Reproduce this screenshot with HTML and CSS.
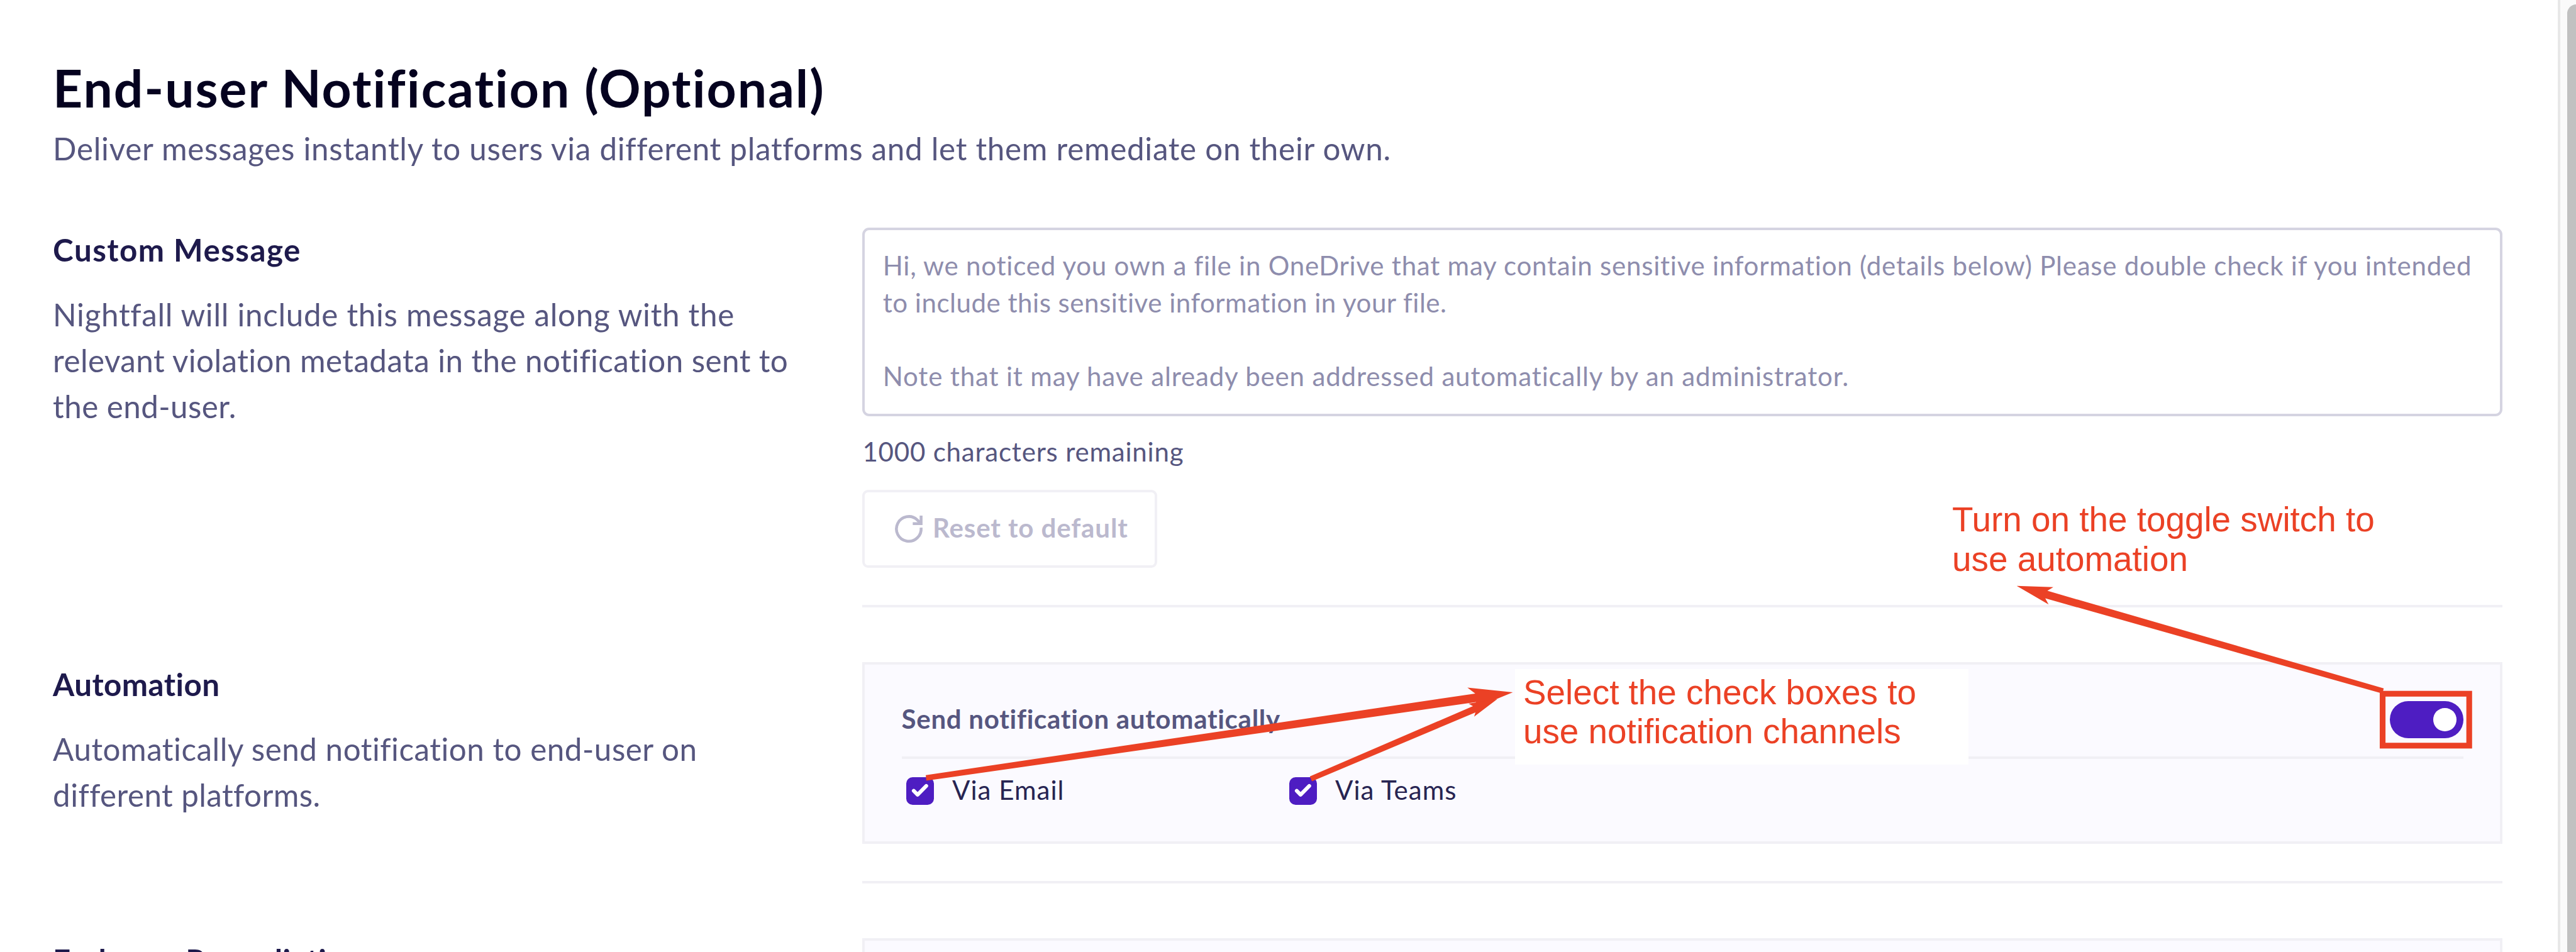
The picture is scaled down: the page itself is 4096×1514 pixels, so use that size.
FILE: index.html
```html
<!DOCTYPE html>
<html lang="en">
<head>
<meta charset="utf-8">
<title>End-user Notification</title>
<link rel="stylesheet" href="styles.css">
</head>
<body>
<div class="page">
  <main class="content">
    <header class="intro">
      <h1>End-user Notification (Optional)</h1>
      <p class="lead">Deliver messages instantly to users via different platforms and let them remediate on their own.</p>
    </header>

    <section class="setting">
      <div class="about">
        <h2>Custom Message</h2>
        <p><span class="ls-74">Nightfall will include this message along with the</span><br><span class="ls-44">relevant violation metadata in the notification sent to</span><br><span class="ls-44">the end-user.</span></p>
      </div>
      <div class="control">
        <div class="message"><span class="ls-80">Hi, we noticed you own a file in OneDrive that may contain sensitive information (details below) Please double check if you intended</span><br><span class="ls-54">to include this sensitive information in your file.</span><br><br><span class="ls-89">Note that it may have already been addressed automatically by an administrator.</span></div>
        <p class="counter">1000 characters remaining</p>
        <button class="reset" type="button">
          <svg class="reset-icon" viewBox="0 0 48 48"><path d="M45.5 22A21.5 21.5 0 1 1 38.6 8.3L44.5 14"/><path d="M45.5 1V15H31"/></svg>
          <span>Reset to default</span>
        </button>
        <div class="divider"></div>
      </div>
    </section>

    <section class="setting">
      <div class="about">
        <h2 class="ls-44">Automation</h2>
        <p><span class="ls-54">Automatically send notification to end-user on</span><br><span class="ls-44">different platforms.</span></p>
      </div>
      <div class="control">
        <div class="panel">
          <div class="panel-head">
            <span class="panel-title">Send notification automatically</span>
            <span class="toggle"><span class="knob"></span></span>
          </div>
          <div class="channels">
            <label class="channel"><span class="check"><svg viewBox="0 0 48 48"><path d="M13 23.7L19.7 30.5L34.8 15.2"/></svg></span><span class="channel-name">Via Email</span></label>
            <label class="channel"><span class="check"><svg viewBox="0 0 48 48"><path d="M13 23.7L19.7 30.5L34.8 15.2"/></svg></span><span class="channel-name">Via Teams</span></label>
          </div>
        </div>
        <div class="divider"></div>
      </div>
    </section>

    <section class="setting">
      <div class="about"><h2 class="ls-44">End-user Remediation</h2></div>
      <div class="control"><div class="panel"><div class="panel-head"></div></div></div>
    </section>
  </main>
  <aside class="scrollbar"><div class="thumb"></div></aside>

  <div class="note note-channels">Select the check boxes to<br>use notification channels</div>
  <div class="note note-toggle">Turn on the toggle switch to<br>use automation</div>
  <svg class="arrows" viewBox="0 0 4480 1656">
    <path d="M1610 1348.3L2565.7 1206.3L2552 1196L2631 1204.3L2557.5 1234.7L2567.3 1221.3L1611 1358Z"/>
    <path d="M2278 1350.4L2561.7 1228.3L2554 1224L2604 1216L2563.7 1246.7L2566 1239.3L2281.7 1359Z"/>
    <path d="M4145.6 1197.3L3560.7 1027.7L3571 1021.3L3507.3 1019L3562.7 1051.3L3557 1040.7L4143.5 1206.5Z"/>
    <rect x="4143.7" y="1206.7" width="150.6" height="90.3"/>
  </svg>
</div>
</body>
</html>
```
FILE: styles.css
```css
* { box-sizing: border-box; margin: 0; padding: 0; }
html, body { overflow: hidden; background: #fff; }

.page {
  zoom: 0.9142857;
  position: relative;
  display: flex;
  width: 4480px;
  height: 1656px;
  overflow: hidden;
  font-family: Lato, "Open Sans", sans-serif;
  color: #56567f;
}
.content { flex: 1; min-width: 0; padding: 96px 96px 0 92px; }

.intro { height: 300px; padding-top: 2px; }
h1 { font-size: 90px; line-height: 110px; font-weight: 700; letter-spacing: 2.15px; color: #05021f; }
.lead { margin-top: 11px; font-size: 54px; line-height: 80px; letter-spacing: 0.77px; }

.setting { display: grid; grid-template-columns: 1408px 2852px; margin-bottom: 96px; }
.about { margin-top: -1px; font-size: 54px; line-height: 80px; white-space: nowrap; }
h2 { margin-bottom: 32px; font-size: 54px; line-height: 80px; font-weight: 700; letter-spacing: 1.6px; color: #1e1a4c; }

.ls-44 { letter-spacing: 0.46px; }
.ls-54 { letter-spacing: 0.56px; }
.ls-74 { letter-spacing: 0.76px; }
.ls-80 { letter-spacing: 0.83px; }
.ls-89 { letter-spacing: 0.91px; }

.message {
  height: 328px;
  padding: 29.5px 31px 0;
  border: 4.4px solid #d5d4e1;
  border-radius: 12px;
  font-size: 46px;
  line-height: 64px;
  white-space: nowrap;
  color: #8e8dad;
}
.counter { height: 64px; margin-top: 28px; padding-top: 1.5px; font-size: 46px; line-height: 64px; letter-spacing: 0.87px; }
.reset {
  display: flex;
  align-items: center;
  gap: 18px;
  width: 512px;
  height: 136px;
  margin-top: 36px;
  padding-left: 51.6px;
  border: 4.4px solid #f1f0f5;
  border-radius: 10px;
  background: #fff;
  font: 700 46px/64px Lato, "Open Sans", sans-serif;
  letter-spacing: 0.97px;
  color: #bbb9ce;
}
.reset span { padding-bottom: 4px; white-space: nowrap; }
.reset-icon { flex: none; width: 48px; height: 48px; overflow: visible; fill: none; stroke: #bbb9ce; stroke-width: 5; }
.divider { height: 4.4px; margin: 64px 0 -0.4px; background: #f1f0f5; }

.panel { height: 316px; padding: 31.6px 63.6px; border: 4.4px solid #f1f0f5; background: #fbfaff; }
.panel-head { display: flex; align-items: center; justify-content: space-between; height: 132px; border-bottom: 4.4px solid #f1f0f5; }
.panel-title { padding-bottom: 3px; font-size: 46px; line-height: 64px; font-weight: 700; letter-spacing: 0.77px; }
.toggle { display: flex; align-items: center; justify-content: flex-end; width: 128px; height: 64px; padding-right: 12px; border-radius: 32px; background: #4e1dc2; }
.knob { width: 40px; height: 40px; border-radius: 50%; background: #fff; }

.channels { display: flex; height: 112px; padding-left: 8px; }
.channel { display: flex; align-items: center; gap: 32px; width: 666px; }
.check { display: flex; width: 48px; height: 48px; border-radius: 11px; background: #4e1dc2; }
.check svg { width: 48px; height: 48px; fill: none; stroke: #fff; stroke-width: 6.5; stroke-linecap: round; stroke-linejoin: round; }
.channel-name { padding-bottom: 4px; font-size: 46px; line-height: 64px; letter-spacing: 1.1px; white-space: nowrap; color: #272452; }

.scrollbar { width: 32px; padding: 8px 0 0 12px; border-left: 4.4px solid #e8e8e8; background: #fafafa; overflow: hidden; }
.thumb { width: 32px; height: 1700px; border-radius: 16px; background: #c1c1c1; }

/* Callouts laid over the form */
.note { position: absolute; font: 60px/68px "Liberation Sans", Arial, sans-serif; white-space: nowrap; color: #eb4125; }
.note-channels { left: 2635px; top: 1164px; width: 788px; height: 166px; padding: 6px 0 0 14px; background: #fff; }
.note-toggle { left: 3395px; top: 870px; }
.arrows { position: absolute; left: 0; top: 0; width: 4480px; height: 1656px; fill: #eb4125; }
.arrows rect { fill: none; stroke: #eb4125; stroke-width: 10; }
```
